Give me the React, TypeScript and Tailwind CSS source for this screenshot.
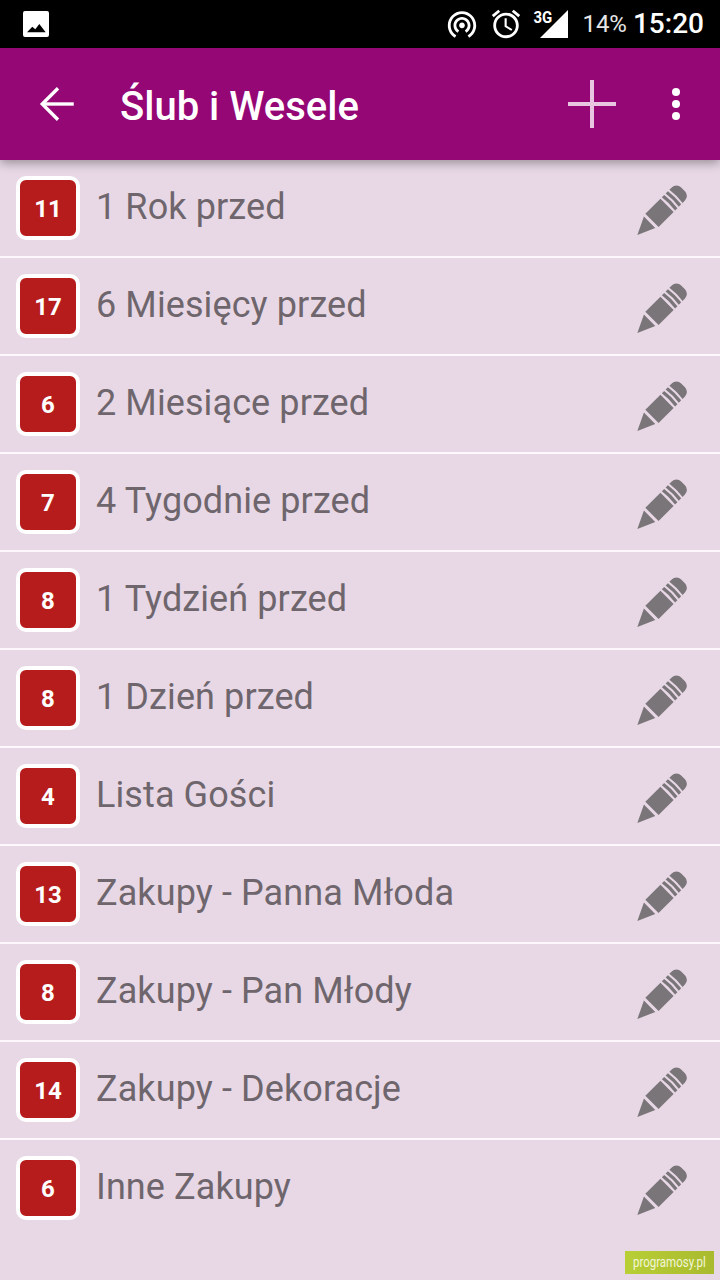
import { ArrowLeft } from 'lucide-react';

const items = [
  { count: 11, label: '1 Rok przed' },
  { count: 17, label: '6 Miesięcy przed' },
  { count: 6, label: '2 Miesiące przed' },
  { count: 7, label: '4 Tygodnie przed' },
  { count: 8, label: '1 Tydzień przed' },
  { count: 8, label: '1 Dzień przed' },
  { count: 4, label: 'Lista Gości' },
  { count: 13, label: 'Zakupy - Panna Młoda' },
  { count: 8, label: 'Zakupy - Pan Młody' },
  { count: 14, label: 'Zakupy - Dekoracje' },
  { count: 6, label: 'Inne Zakupy' },
];

function PencilIcon() {
  return (
    <svg viewBox="0 0 240 240" className="h-20 w-20 shrink-0" fill="#7a7579">
      <g transform="translate(52 201) rotate(-45)">
        <path d="M0 0 L53 -25 L53 23 Z" />
        <rect x="62" y="-28" width="64" height="56" />
        <path d="M132 -28 Q136 0 132 28 H142 Q146 0 142 -28 Z" />
        <path d="M148 -28 Q152 0 148 28 H158 Q162 0 158 -28 Z" />
        <path d="M164 -28 H174 A20 20 0 0 1 194 -8 V8 A20 20 0 0 1 174 28 H164 Q168 0 164 -28 Z" />
      </g>
    </svg>
  );
}

function StatusBar() {
  return (
    <div className="flex h-12 items-center bg-black pl-[23px] pr-4 text-white">
      <svg viewBox="0 0 26 26" className="h-[26px] w-[26px]" fill="white">
        <path d="M2 0h22a2 2 0 0 1 2 2v22a2 2 0 0 1-2 2H2a2 2 0 0 1-2-2V2a2 2 0 0 1 2-2zM4 21.3h18.7L16.3 13l-4 5.3-3-2.6z" fillRule="evenodd" />
      </svg>
      <svg viewBox="0 0 24 24" className="ml-auto h-[34px] w-[34px]" fill="white">
        <path d="M12 11c-1.1 0-2 .9-2 2s.9 2 2 2 2-.9 2-2-.9-2-2-2zm6 2c0-3.31-2.69-6-6-6s-6 2.69-6 6c0 2.22 1.21 4.15 3 5.19l1-1.74c-1.19-.7-2-1.97-2-3.45 0-2.21 1.79-4 4-4s4 1.79 4 4c0 1.48-.81 2.75-2 3.45l1 1.74c1.79-1.04 3-2.97 3-5.19zM12 3C6.48 3 2 7.48 2 13c0 3.7 2.01 6.92 4.99 8.65l1-1.73C5.61 18.53 4 15.96 4 13c0-4.42 3.58-8 8-8s8 3.58 8 8c0 2.96-1.61 5.53-4 6.92l1 1.73c2.99-1.73 5-4.95 5-8.65 0-5.52-4.48-10-10-10z" />
      </svg>
      <svg viewBox="0 0 24 24" className="ml-[10px] h-[34px] w-[34px]" fill="white">
        <path d="M22 5.72l-4.6-3.86-1.29 1.53 4.6 3.86L22 5.72zM7.88 3.39L6.6 1.86 2 5.71l1.29 1.53 4.59-3.85zM12.5 8H11v6l4.75 2.85.75-1.23-4-2.37V8zM12 4c-4.97 0-9 4.03-9 9s4.03 9 9 9 9-4.03 9-9-4.03-9-9-9zm0 16c-3.87 0-7-3.13-7-7s3.13-7 7-7 7 3.13 7 7-3.13 7-7 7z" />
      </svg>
      <div className="relative ml-[9px] h-[30px] w-[36px]">
        <span className="absolute left-[1px] top-[-1px] origin-top-left scale-y-[1.1] text-[15px] font-bold leading-[18px]">3G</span>
        <svg viewBox="0 0 28 28" className="absolute bottom-[1px] right-0 h-[28px] w-[28px]" fill="white">
          <path d="M28 0V28H0Z" />
        </svg>
      </div>
      <span className="ml-[14px] text-[24px] leading-none text-[#e6e6e6]">14%</span>
      <span className="ml-[6px] text-[28px] font-medium leading-none">15:20</span>
    </div>
  );
}

function Header() {
  return (
    <div className="relative z-10 flex h-[112px] items-center bg-[#950775] shadow-[0_3px_10px_rgba(0,0,0,0.35)]">
      <ArrowLeft className="ml-[31px] h-[54px] w-[54px] text-white" strokeWidth={1.5} strokeLinecap="butt" strokeLinejoin="miter" />
      <h1 className="ml-[35px] pt-[5px] text-[40px] font-medium leading-none text-white">Ślub i Wesele</h1>
      <div className="relative ml-auto mr-[104px] h-12 w-12">
        <div className="absolute left-0 top-[22px] h-1 w-12 bg-[#e8c6e2]" />
        <div className="absolute left-[22px] top-0 h-12 w-1 bg-[#e8c6e2]" />
      </div>
      <div className="absolute right-[40px] top-[40px] flex flex-col gap-[4px]">
        <span className="h-2 w-2 rounded-full bg-white" />
        <span className="h-2 w-2 rounded-full bg-white" />
        <span className="h-2 w-2 rounded-full bg-white" />
      </div>
    </div>
  );
}

export default function App() {
  return (
    <div className="relative flex h-[1280px] w-[720px] flex-col overflow-hidden bg-[#e8d8e6] font-['Roboto',sans-serif]">
      <StatusBar />
      <Header />
      <div className="flex flex-col">
        {items.map((item, i) => (
          <div
            key={i}
            className={`flex items-center pl-4 pr-5 ${i < items.length - 1 ? 'h-[98px] border-b-2 border-[#fbf7fb]' : 'h-[96px]'}`}
          >
            <div className="flex h-16 w-16 shrink-0 items-center justify-center rounded-[10px] border-4 border-white bg-[#b71c1c] pt-[1px] text-[24px] font-bold text-white">
              {item.count}
            </div>
            <span className="mb-[2px] ml-4 text-[36px] leading-none tracking-[0.1px] text-[#6e666c]">{item.label}</span>
            <div className="ml-auto">
              <PencilIcon />
            </div>
          </div>
        ))}
      </div>
      <div className="absolute bottom-[6px] right-[6px] flex h-[23px] w-[89px] items-center justify-center bg-gradient-to-r from-[#b8cf36] to-[#a9ba2e] text-[#f2f6d8]">
        <span className="scale-x-[0.82] whitespace-nowrap text-[14px]">programosy.pl</span>
      </div>
    </div>
  );
}
